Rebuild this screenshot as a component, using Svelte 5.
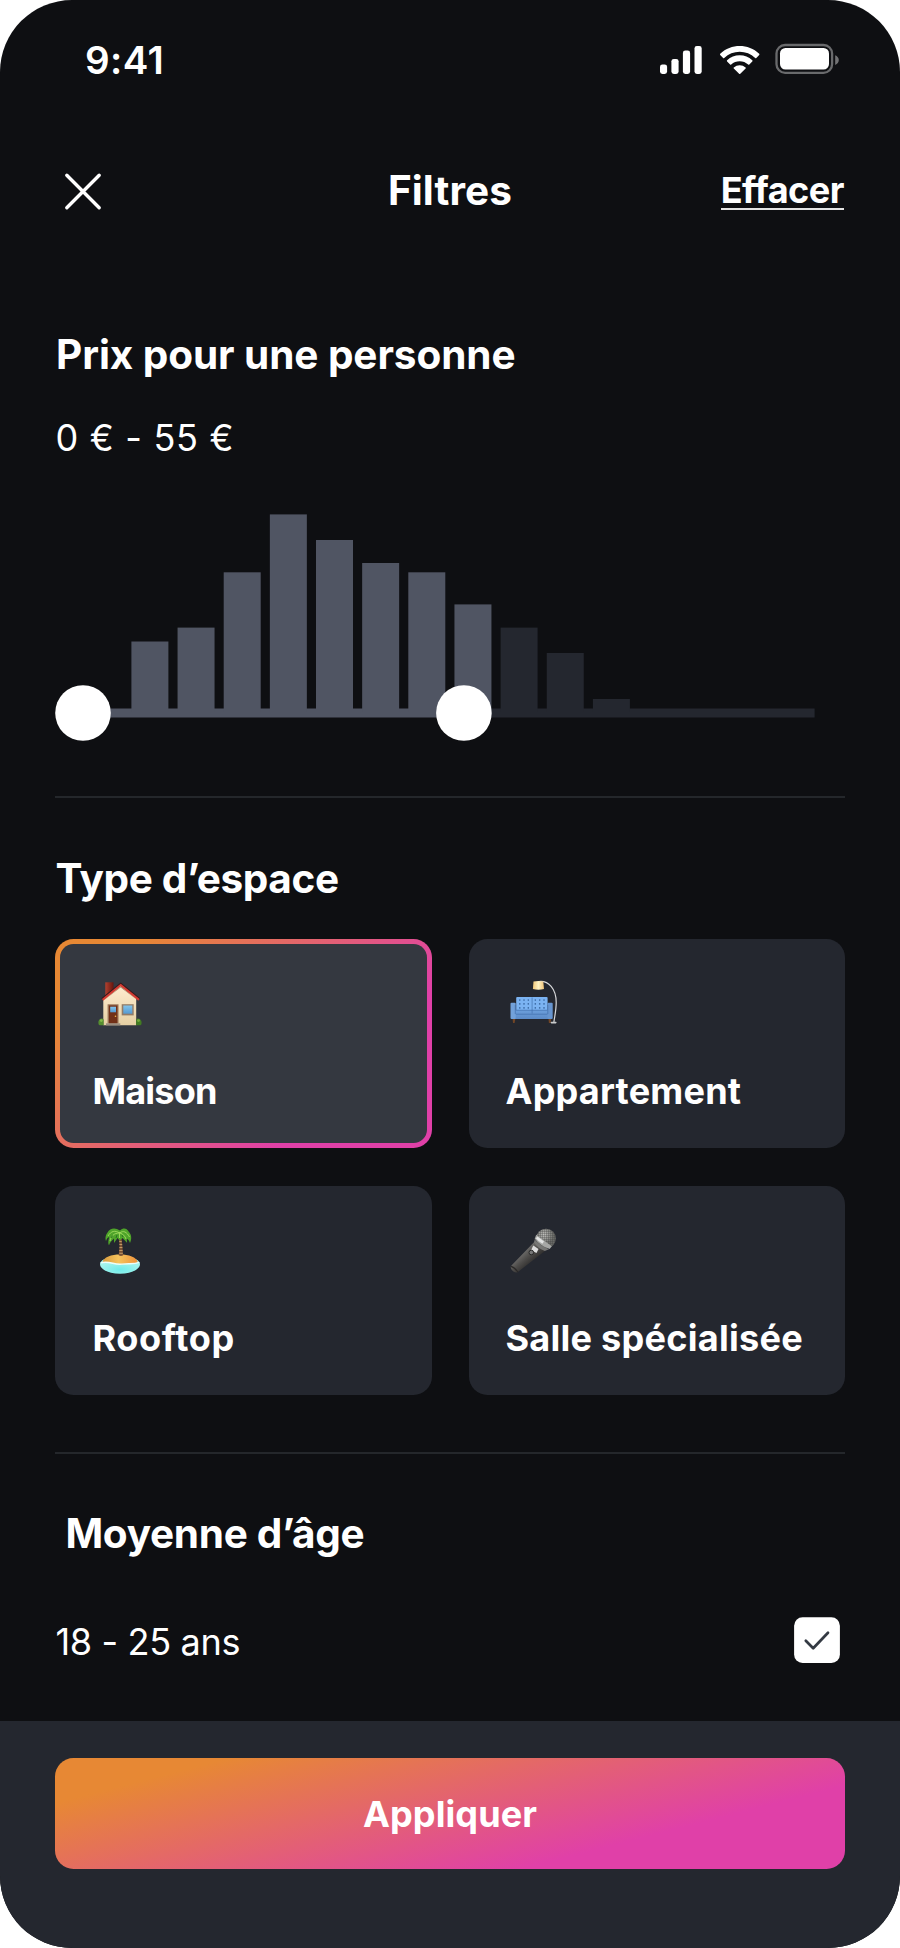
<script>
  const bars = [
    { top: 641.5, active: true },
    { top: 627.6, active: true },
    { top: 572.3, active: true },
    { top: 514.4, active: true },
    { top: 540, active: true },
    { top: 563, active: true },
    { top: 572.3, active: true },
    { top: 604.4, active: true },
    { top: 627.6, active: false },
    { top: 653, active: false },
    { top: 699, active: false }
  ];
  const types = [
    { id: 'house', label: 'Maison', spacing: -0.8 },
    { id: 'sofa', label: 'Appartement', spacing: 0.2 },
    { id: 'island', label: 'Rooftop', spacing: 0.6 },
    { id: 'mic', label: 'Salle spécialisée', spacing: 0.24 }
  ];
  let selected = $state('house');
  let checked = $state(true);
</script>

<div class="screen">
  <div class="status">
    <span class="time">9:41</span>
    <svg width="184" height="40" viewBox="656 40 184 40">
      <g fill="#fff">
        <rect x="660" y="64.4" width="7.1" height="9.6" rx="2.4" />
        <rect x="671.4" y="58.9" width="7.2" height="15.1" rx="2.4" />
        <rect x="682.9" y="50.6" width="7.2" height="23.4" rx="2.4" />
        <rect x="694.5" y="46" width="7.2" height="28" rx="2.4" />
        <path d="M739.7 51.7c5.8 0 11.3 2.2 15.5 6.2.3.3.8.3 1.1 0l2.9-3a.9.9 0 0 0 0-1.2c-10.9-10.3-28.1-10.3-39 0a.9.9 0 0 0 0 1.2l2.9 3c.3.3.8.3 1.1 0 4.2-4 9.7-6.2 15.5-6.2z" />
        <path d="M739.7 61.2c3.1 0 6.2 1.2 8.5 3.3.3.3.8.3 1.1 0l3-3a.9.9 0 0 0 0-1.2 18.4 18.4 0 0 0-25.2 0 .9.9 0 0 0 0 1.2l3 3c.3.3.8.3 1.1 0a12.7 12.7 0 0 1 8.5-3.3z" />
        <path d="M745.6 68.6a.8.8 0 0 0 0-1.2 9.2 9.2 0 0 0-11.8 0 .8.8 0 0 0 0 1.2l5.3 5.2c.3.3.9.3 1.2 0z" />
        <rect x="780" y="48" width="49" height="21.6" rx="5.5" />
        <path d="M835.2 55.2v9.8c2.2-.9 3.6-2.8 3.6-4.9s-1.4-4-3.6-4.9z" opacity=".42" />
      </g>
      <rect x="776.5" y="45" width="55.6" height="27.8" rx="8.6" fill="none" stroke="#fff" stroke-opacity=".38" stroke-width="2.3" />
    </svg>
  </div>

  <header>
    <button class="close" aria-label="Fermer">
      <svg width="56" height="60" viewBox="55 159 56 60">
        <path d="M66.8 175.3 99.2 207.8M99.2 175.3 66.8 207.8" stroke="#fff" stroke-width="3.4" stroke-linecap="round" />
      </svg>
    </button>
    <h1>Filtres</h1>
    <button class="clear">Effacer</button>
  </header>

  <main>
    <h2 class="price-title">Prix pour une personne</h2>
    <p class="range">0 € - 55 €</p>

    <svg class="chart" width="790" height="229" viewBox="55 513 790 229">
      <path d="M83 708.5H463.8V717.6H83z" fill="#505563" />
      <path d="M463.8 708.5H814.6V717.6H463.8z" fill="#24272f" />
      {#each bars as bar, i}
        <rect x={131.4 + i * 46.15} y={bar.top} width="37" height={712 - bar.top} fill={bar.active ? '#505563' : '#24272f'} />
      {/each}
      <circle cx="83" cy="713" r="27.8" fill="#fff" />
      <circle cx="463.9" cy="713" r="27.8" fill="#fff" />
    </svg>

    <hr />

    <h2 class="type-title">Type d’espace</h2>
    <div class="grid">
      {#each types as type}
        <button class="card" class:selected={selected === type.id} onclick={() => (selected = type.id)}>
          <svg width="60" height="60" viewBox="0 0 60 60">
            {#if type.id === 'house'}
              <defs>
                <linearGradient id="wall" x1="0" y1="0" x2="0" y2="1"><stop stop-color="#ffedd0" /><stop offset="1" stop-color="#e6d0a4" /></linearGradient>
                <linearGradient id="pane" x1="0" y1="0" x2="0" y2="1"><stop stop-color="#82c4ec" /><stop offset="1" stop-color="#5599d0" /></linearGradient>
                <linearGradient id="brick"><stop stop-color="#b2412f" /><stop offset="1" stop-color="#65150e" /></linearGradient>
              </defs>
              <rect x="13.3" y="6.3" width="8.2" height="13" fill="url(#brick)" />
              <path d="M11.3 22 28.5 9.5 44.2 22V49.3H11.3z" fill="url(#wall)" />
              <path d="M28.7 6.5 48.2 22.2 46.8 23.5 28.6 8.5 10.5 23.5 9.3 22.2z" fill="#3a1719" />
              <path d="M28.7 7.7 47.6 23.1 46.3 24.7 28.6 10.6 11.2 24.7 10 23.1z" fill="#d53c33" />
              <path d="M28.6 10.6 46.3 24.7 28.6 11.6 11.2 24.7z" fill="#a18465" />
              <path d="M15.6 28.3H26.5V47.5H15.6z" fill="#997155" />
              <path d="M17 29.5H25.3V47.5H17z" fill="#713017" />
              <path d="M18.2 30.7H24V36.3H18.2z" fill="url(#pane)" />
              <circle cx="23.5" cy="40.3" r=".8" fill="#f5b84c" />
              <path d="M14 47.3H28.3V49.4H14z" fill="#9a8d80" />
              <path d="M29.7 28.2H41.7V39.4H29.7z" fill="#937c67" />
              <path d="M31.3 29.5H40.3V37.7H31.3z" fill="url(#pane)" />
              <path d="M6.7 48.4c-1-2.7.4-5.8 3-5.9 1 0 1.7.6 2 1.4v5.4H7.6z" fill="#568e30" />
              <path d="M49.3 48.4c1-2.7-.6-5.8-3.3-5.9-1 0-1.6.6-1.9 1.4v5.4h4.3z" fill="#427c22" />
              <circle cx="9.3" cy="44.6" r="1.4" fill="#83b94b" /><circle cx="46.5" cy="44.6" r="1.4" fill="#75ab3c" />
            {:else if type.id === 'sofa'}
              <defs>
                <linearGradient id="shade"><stop stop-color="#f2c879" /><stop offset=".5" stop-color="#fff3c4" /><stop offset="1" stop-color="#f0c478" /></linearGradient>
                <linearGradient id="seat" x1="0" y1="0" x2="0" y2="1"><stop stop-color="#6c9fdc" /><stop offset="1" stop-color="#5c8bc8" /></linearGradient>
              </defs>
              <path d="M6.5 42h3l-.9 5H7zM42.4 42h3l-.8 5h-1.7z" fill="#714526" />
              <rect x="10.2" y="21" width="31.4" height="15" rx="1" fill="#7bb3f2" />
              {#each [24.1, 27.9, 31.9] as cy}
                {#each [13.8, 18, 22.3, 29.3, 33.7, 38] as cx}
                  <circle {cx} {cy} r=".8" fill="#38669f" />
                {/each}
              {/each}
              <path d="M26.1 21.5V34" stroke="#497ab6" stroke-width=".8" />
              <rect x="8" y="34" width="35" height="9" fill="url(#seat)" />
              <path d="M9 38.2H42.5M26.1 34V37.5M9 34.2H42.5" stroke="#426fae" stroke-width=".7" />
              <rect x="4.5" y="26.7" width="5.2" height="16.3" rx="1" fill="#72a1da" />
              <rect x="41.5" y="26.7" width="5.2" height="16.3" rx="1" fill="#6795d0" />
              <path d="M9.3 29V38M41.8 29V38" stroke="#426fae" stroke-width=".7" />
              <path d="M33 5.5C42.5 4.3 50.2 13 50.2 26.5C50.2 34 48.7 40 47.9 46" fill="none" stroke="#d7d8da" stroke-width="1.2" />
              <rect x="44.6" y="45.7" width="6" height="1.7" rx=".8" fill="#c9cbcc" />
              <path d="M27.5 5.4Q32.3 4.4 37.3 5.4L38 13.1Q32.3 14.5 26.9 13.1z" fill="url(#shade)" />
            {:else if type.id === 'island'}
              <defs>
                <linearGradient id="sand"><stop stop-color="#d79a3d" /><stop offset=".45" stop-color="#f6c45d" /><stop offset="1" stop-color="#ef9139" /></linearGradient>
                <radialGradient id="sea" cx=".5" cy=".7"><stop stop-color="#6feceb" /><stop offset="1" stop-color="#a1f3ec" /></radialGradient>
              </defs>
              <path d="M8 41C8 46.5 17 50.8 28 50.8S48 46.5 48 41C48 39 46 37.5 44.5 36.5H11.500C10 37.500 8 39 8 41z" fill="url(#sea)" />
              <path d="M10.500 39.300C12 28.800 44 28.800 45.800 39.300C41.500 42.300 36 40.200 31 41.200C23 42.300 18 38 10.500 39.300z" fill="url(#sand)" />
              <path d="M8.700 39.800C18 37.500 22 42.300 30 41.100C37 40.100 41 41.700 47.300 39.400" fill="none" stroke="#ebfffb" stroke-width="1.300" />
              <path d="M26.5 14H29.5L31.2 32.2Q29 33.6 26.7 32.2L27.6 22z" fill="#7b5134" />
              <path d="M27.3 18.5h2.4M27.4 21.5h2.8M27.4 24.5h3M27.3 27.5h3.3M27.3 30.3h3.5" stroke="#caa06a" stroke-width=".9" />
              <path d="M28 7.5C23 4 18 5 15.5 9.5C13 13 13.3 16 14 18C15 15 16 14.5 17.2 14C16 18 16 21 17 22.3C18 19 20.5 17 22 15.5V20L25.5 15 27.8 17.5 30.5 15 35 19.7 34.8 15.5C36.5 17 37.5 18 38 20C39.8 16 39.8 12 37 9C34.5 5 31.5 4.5 28 7.5z" fill="#4fa42a" />
              <path d="M27.5 10C23 7 19 8 16 13M27.5 10C22 10 19 13 18 18M28 10C31 7 35 9 37.5 14M28 10C31 11 33 13 34 16M27.5 9V15" fill="none" stroke="#9bd75b" stroke-width="1" />
              <path d="M19 15L20.5 12.5M31 14L30 12M24 15L25 12" stroke="#277521" stroke-width="1" />
            {:else}
              <defs>
                <linearGradient id="body" x1="0" y1="0" x2="1" y2="1"><stop offset=".3" stop-color="#777674" /><stop offset=".5" stop-color="#4c4a48" /><stop offset=".75" stop-color="#1e1d1d" /></linearGradient>
                <radialGradient id="head" cx=".4" cy=".3"><stop stop-color="#c4c4c0" /><stop offset="1" stop-color="#6a6b68" /></radialGradient>
                <pattern id="mesh" width="2" height="2" patternUnits="userSpaceOnUse"><path d="M0 0H2M0 0V2" stroke="#3c3d3b" stroke-width=".6" /></pattern>
              </defs>
              <path d="M28.7 18.5 39.5 27.5 12.5 48.6Q10.7 50.6 7 48.2Q3.7 45.5 5.2 42.8z" fill="url(#body)" />
              <path d="M5 43.3Q8.7 44.3 11.8 49" fill="none" stroke="#2b2928" stroke-width="1.3" />
              <circle cx="40" cy="15.5" r="9.8" fill="url(#head)" />
              <circle cx="40" cy="15.5" r="9.8" fill="url(#mesh)" />
              <path d="M30.2 11.8 45.8 23.3 43.7 26.1Q35 23.5 28.7 15.8z" fill="#a7a8a6" />
              <path d="M31.5 13.5 38 18.4 36.4 20.7Q32 18.2 29.9 15.3z" fill="#e3e4e4" />
              <path d="M28.7 16.2Q33.5 22.5 43 26.3L38.8 28Q32 25.7 28 19.5z" fill="#777775" />
              <path d="M27.3 22.5 32.5 26 30.5 30 25 27.2z" fill="#ddd" />
              <circle cx="25.3" cy="29.5" r="2.3" fill="#777" stroke="#292929" />
            {/if}
          </svg>
          <span style="letter-spacing:{type.spacing}px">{type.label}</span>
        </button>
      {/each}
    </div>

    <hr />

    <h2 class="age-title">Moyenne d’âge</h2>
    <label class="age-row">
      <span>18 - 25 ans</span>
      <input type="checkbox" bind:checked />
      <svg width="46" height="46" viewBox="0 0 46 46">
        <rect x=".1" y=".2" width="45.8" height="45.8" rx="8.5" fill="#fff" />
        {#if checked}
          <path d="M11.8 23.7 19.2 31.2 34 15.7" fill="none" stroke="#343a43" stroke-width="2.7" stroke-linecap="round" stroke-linejoin="round" />
        {/if}
      </svg>
    </label>
  </main>

  <footer>
    <button class="apply">Appliquer</button>
  </footer>
</div>

<style>
  :global(body) {
    background: #fff;
  }
  .screen {
    width: 900px;
    height: 1947.7px;
    box-sizing: border-box;
    border-radius: 72px;
    overflow: hidden;
    background: #0e0f12;
    color: #fff;
    font-family: Inter, sans-serif;
    display: flex;
    flex-direction: column;
  }
  button {
    border: 0;
    padding: 0;
    margin: 0;
    background: none;
    color: inherit;
    font: inherit;
    cursor: pointer;
  }
  svg {
    display: block;
    flex: none;
  }
  h1,
  h2,
  p {
    margin: 0;
  }
  .status {
    height: 159px;
    flex: none;
    box-sizing: border-box;
    padding: 40px 60px 0 85px;
    display: flex;
    justify-content: space-between;
    align-items: flex-start;
  }
  .time {
    font: 600 38.5px/40px Inter, sans-serif;
    letter-spacing: 0.4px;
  }
  header {
    height: 60px;
    flex: none;
    padding: 0 56px 0 55px;
    display: grid;
    grid-template-columns: 1fr auto 1fr;
    align-items: start;
  }
  .close {
    justify-self: start;
  }
  h1 {
    font-size: 40.5px;
    font-weight: 700;
    line-height: 60px;
    padding: 2px 0 0 1px;
    letter-spacing: 0.1px;
  }
  .clear {
    justify-self: end;
    height: 51px;
    box-sizing: border-box;
    border-bottom: 2px solid #e4e4e4;
    font-size: 36.1px;
    font-weight: 700;
    line-height: 63px;
    letter-spacing: -0.5px;
    display: flex;
  }
  main {
    flex: 1;
    min-height: 0;
    padding: 110.5px 55.4px 0;
  }
  h2 {
    font-size: 40.5px;
    font-weight: 700;
    line-height: 51px;
    height: 48px;
    white-space: nowrap;
  }
  .price-title {
    line-height: 49px;
    letter-spacing: -0.07px;
    padding-left: 0.6px;
  }
  .range {
    margin-top: 38.2px;
    height: 40px;
    font-size: 36.1px;
    line-height: 44px;
    letter-spacing: 0.7px;
  }
  .chart {
    margin: 57.3px 0 0 -0.4px;
  }
  hr {
    height: 2.3px;
    margin: 54px 0 0;
    border: 0;
    background: #24272b;
  }
  .type-title {
    margin-top: 54.7px;
    letter-spacing: -0.35px;
  }
  .grid {
    margin-top: 38.5px;
    display: grid;
    grid-template-columns: 1fr 1fr;
    grid-auto-rows: 209px;
    gap: 37.8px 37px;
  }
  .card {
    box-sizing: border-box;
    border: 5px solid transparent;
    border-radius: 18.5px;
    background: #24272f border-box;
    padding: 32px;
    display: flex;
    flex-direction: column;
    align-items: flex-start;
    gap: 33px;
    text-align: left;
  }
  .card.selected {
    background:
      linear-gradient(#343840, #343840) padding-box,
      linear-gradient(135deg, #e78834 14.3%, #e040a8 73.5%) border-box;
  }
  .card span {
    font-size: 36.1px;
    font-weight: 700;
    line-height: 44px;
    white-space: nowrap;
  }
  .grid + hr {
    margin-top: 56.5px;
  }
  .age-title {
    margin: 53.5px 0 0 10px;
    letter-spacing: -0.3px;
  }
  .age-row {
    margin-top: 60.7px;
    padding-right: 4.4px;
    height: 48px;
    display: flex;
    align-items: center;
    justify-content: space-between;
    font-size: 36.1px;
    letter-spacing: -0.35px;
  }
  .age-row span {
    padding-top: 3px;
  }
  .age-row input {
    display: none;
  }
  footer {
    height: 226.5px;
    flex: none;
    box-sizing: border-box;
    padding: 37px 55.4px 0;
    background: #24272f;
  }
  .apply {
    display: block;
    width: 100%;
    height: 110.8px;
    border-radius: 18.5px;
    background: linear-gradient(165.6deg, #e78834 14.3%, #e040a8 73.5%);
    font-size: 36.1px;
    font-weight: 700;
    line-height: 113px;
    letter-spacing: 0.07px;
    text-align: center;
  }
</style>
